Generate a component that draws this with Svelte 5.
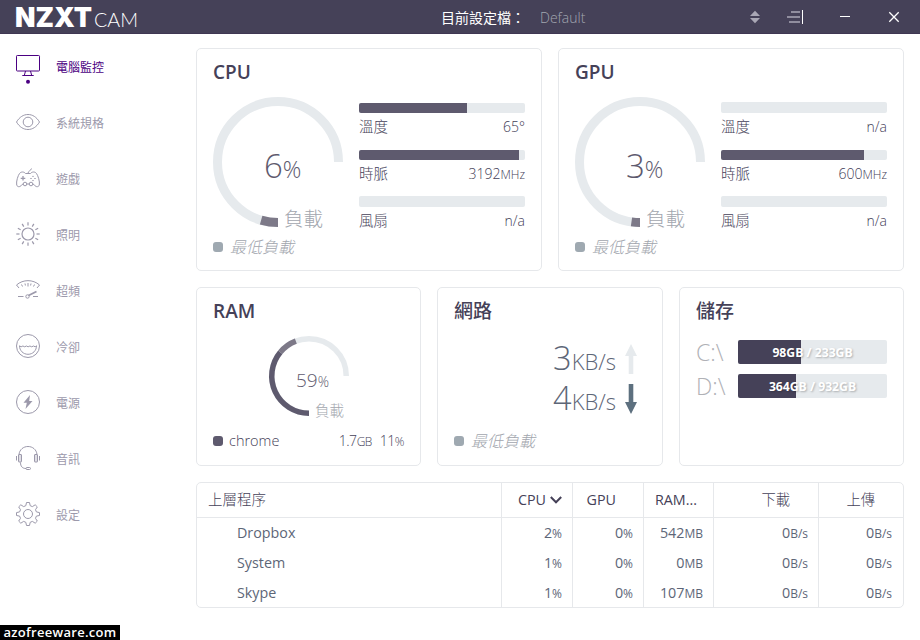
<script lang="ts">
  type Meter = { label: string; value: string; unit?: string; fill: number | null };

  const nav = [
    { id: 'monitor', label: '電腦監控' },
    { id: 'specs', label: '系統規格' },
    { id: 'games', label: '遊戲' },
    { id: 'lighting', label: '照明' },
    { id: 'overclock', label: '超頻' },
    { id: 'cooling', label: '冷卻' },
    { id: 'power', label: '電源' },
    { id: 'audio', label: '音訊' },
    { id: 'settings', label: '設定' }
  ];
  let active = $state('monitor');

  const units: Array<{ title: string; load: number; meters: Meter[] }> = [
    {
      title: 'CPU',
      load: 6,
      meters: [
        { label: '溫度', value: '65°', fill: 65 },
        { label: '時脈', value: '3192', unit: 'MHz', fill: 96.5 },
        { label: '風扇', value: 'n/a', fill: null }
      ]
    },
    {
      title: 'GPU',
      load: 3,
      meters: [
        { label: '溫度', value: 'n/a', fill: null },
        { label: '時脈', value: '600', unit: 'MHz', fill: 86 },
        { label: '風扇', value: 'n/a', fill: null }
      ]
    }
  ];

  const drives = [
    { name: 'C:\\', used: 98, total: 233 },
    { name: 'D:\\', used: 364, total: 932 }
  ];

  const processes = [
    { name: 'Dropbox', cpu: 2, gpu: 0, ram: 542, down: 0, up: 0 },
    { name: 'System', cpu: 1, gpu: 0, ram: 0, down: 0, up: 0 },
    { name: 'Skype', cpu: 1, gpu: 0, ram: 107, down: 0, up: 0 }
  ];

  const rays = Array.from({ length: 12 }, (_, i) => i * 30);

  // gauge runs clockwise from the bottom and spans 270 degrees
  function arc(size: number, width: number, from: number, to: number) {
    const c = size / 2;
    const r = c - width / 2;
    const a = (from * 2.7 * Math.PI) / 180;
    const b = (to * 2.7 * Math.PI) / 180;
    const large = b - a > Math.PI ? 1 : 0;
    return `M${c - r * Math.sin(a)} ${c + r * Math.cos(a)}A${r} ${r} 0 ${large} 1 ${c - r * Math.sin(b)} ${c + r * Math.cos(b)}`;
  }
</script>

{#snippet icon(id: string)}
  <svg class="icon" viewBox="0 0 24 24" width="24" height="24">
    {#if id === 'monitor'}
      <rect x=".5" y="1.500" width="23" height="15.500" rx=".8" />
      <path d="M9.500 17 8.300 21.500M14.500 17l1.200 4.500M6.300 21.500h11.400" />
      <circle class="solid" cx="12" cy="27.800" r="2" />
    {:else if id === 'specs'}
      <path d="M.5 12C3.500 7 7.500 4.500 12 4.500S20.500 7 23.500 12C20.500 17 16.500 19.500 12 19.500S3.500 17 .5 12z" />
      <circle cx="12" cy="12" r="4.800" />
    {:else if id === 'games'}
      <path d="M12 7.500C12 4.500 14.500 5.500 15.500 2.500" />
      <path d="M9.500 7.500h5C16 5.500 19 5.500 20.500 7.500C22 9.500 24 15.500 23.300 19C22.500 21.500 19.500 21 18.500 19L17 18M7 18L5.500 19C4.500 21 1.500 21.500.7 19C0 15.500 2 9.500 3.500 7.500C5 5.500 8 5.500 9.500 7.500M10.700 18h2.600" />
      <circle cx="9" cy="18" r="1.800" /><circle cx="15" cy="18" r="1.800" />
      <path d="M4.700 12.300h4.600M7 10v4.600" stroke-width="1.300" />
      <path d="M16.300 10.400h1.400M18.300 12.500h1.400M16.300 14.600h1.400M14.300 12.500h1.400" />
    {:else if id === 'lighting'}
      <circle cx="12" cy="12" r="6" stroke-width="1.200" />
      {#each rays as deg}
        <path d="M12 .3v3.200" stroke-width="1.200" transform="rotate({deg} 12 12)" />
      {/each}
    {:else if id === 'overclock'}
      <path d="M.5 7C7 1.200 17 1.200 23.500 7M.5 7l2.500 3M23.500 7l-2.500 3M5.500 6.500l1 2M9 5.500l.4 2M12 5v3.500M15 5.500l-.4 2M18.500 6.500l-1 2" />
      <path d="M2 18.500h5.500M17 18.500h5" />
      <path d="M12.500 17.500 20.500 13.500" stroke-width="1.600" />
      <circle cx="11.500" cy="18.500" r="1.700" />
    {:else if id === 'cooling'}
      <circle cx="12" cy="12" r="11.500" />
      <path d="M3.500 11.800l1.600 1 1.800-.8 1.800.8 1.700-.8 1.700.8 1.800-.8 1.800.8 1.800-.8 1.700.8 1.300-1C20.500 16.500 16.800 20.300 12 20.300S3.500 16.500 3.500 11.800z" />
    {:else if id === 'power'}
      <circle cx="12" cy="12" r="11.500" />
      <path class="solid" d="M14 5 7.500 12.800h3.300L9.500 19 16.500 11h-3.300z" />
    {:else if id === 'audio'}
      <path d="M3 8.500C3.500 3.500 7.500.5 12 .5S20.500 3.500 21 8.500M.5 10v4.500M23.500 10v4.500M4.500 16.500C4.500 20.500 6.500 22.500 10 22.500" />
      <rect class="pad" x="2.500" y="8.500" width="3" height="7.500" rx=".5" />
      <rect class="pad" x="18.500" y="8.500" width="3" height="7.500" rx=".5" />
      <rect x="10" y="21.500" width="4.500" height="2" rx="1" />
    {:else}
      <path stroke-linejoin="round" d="M10.500.5h3l.7 3.200 2.200.9 2.800-1.800 2.100 2.100-1.800 2.800.9 2.200 3.100.7v2.900l-3.100.6-.9 2.200 1.800 2.800-2.100 2.100-2.800-1.800-2.200.9-.7 3.200h-3l-.7-3.200-2.200-.9-2.800 1.800-2.100-2.100 1.800-2.800-.9-2.200-3.100-.6v-2.900l3.100-.7.9-2.200-1.800-2.800 2.100-2.100 2.800 1.800 2.200-.9z" />
      <circle cx="12" cy="12" r="4.500" />
    {/if}
  </svg>
{/snippet}

{#snippet idle()}
  <div class="legend idle"><i class="chip"></i><em>最低負載</em></div>
{/snippet}

<div class="app">
  <header class="titlebar">
    <svg class="logo" viewBox="0 0 124 34" width="124" height="34" aria-label="NZXT CAM">
      <text class="brand" x="-1" y="26.500" textLength="77" lengthAdjust="spacingAndGlyphs">NZXT</text>
      <text class="product" x="78" y="27" textLength="44" lengthAdjust="spacingAndGlyphs">CAM</text>
    </svg>
    <span class="profile-label">目前設定檔：</span>
    <button class="profile">
      <span>Default</span>
      <svg width="10" height="14" viewBox="0 0 10 14"><path d="M0 6 5 .8 10 6zM0 8h10L5 13.200z" fill="#a9a7b5" /></svg>
    </button>
    <svg class="dock" width="17" height="14" viewBox="0 0 17 14">
      <path d="M4 2h9M0 7h13M2 12h11" stroke="#a9a7b5" stroke-width="1.500" />
      <path d="M15.500 0v14" stroke="#fff" />
    </svg>
    <svg class="minimize" width="10" height="10" viewBox="0 0 10 10"><path d="M0 4.500h10" stroke="#fff" /></svg>
    <svg class="close" width="10" height="10" viewBox="0 0 10 10"><path d="M.3.300l9.400 9.400M9.700.300.300 9.700" stroke="#fff" stroke-width="1.300" /></svg>
  </header>

  <div class="body">
    <nav>
      {#each nav as item}
        <button class="nav-item" class:active={item.id === active} onclick={() => (active = item.id)}>
          {@render icon(item.id)}
          <span>{item.label}</span>
        </button>
      {/each}
    </nav>

    <main>
      <div class="row two">
        {#each units as unit}
          <section class="card">
            <h2>{unit.title}</h2>
            <div class="unit-body">
              <div class="gauge large">
                <svg width="130" height="130" viewBox="0 0 130 130">
                  <path class="track" d={arc(130, 9, 0, 100)} stroke-width="9" />
                  <path class="part" d={arc(130, 9, 0, unit.load)} stroke-width="9" />
                </svg>
                <div class="percent">{unit.load}<small>%</small></div>
                <span class="caption">負載</span>
              </div>
              <div class="meters">
                {#each unit.meters as m}
                  <div class="meter">
                    <div class="bar" class:blank={m.fill === null}>
                      {#if m.fill !== null}<div class="fill" style="width: {m.fill}%"></div>{/if}
                    </div>
                    <div class="meter-text">
                      <span>{m.label}</span>
                      <span class="value">{m.value}{#if m.unit}<small>{m.unit}</small>{/if}</span>
                    </div>
                  </div>
                {/each}
              </div>
            </div>
            {@render idle()}
          </section>
        {/each}
      </div>

      <div class="row three">
        <section class="card">
          <h2>RAM</h2>
          <div class="gauge small">
            <svg width="80" height="80" viewBox="0 0 80 80">
              <path class="track" d={arc(80, 5.5, 0, 100)} stroke-width="5.500" />
              <path class="main" d={arc(80, 5.5, 0, 48)} stroke-width="5.500" />
              <path class="part" d={arc(80, 5.5, 48, 59)} stroke-width="5.500" />
            </svg>
            <div class="percent">59<small>%</small></div>
            <span class="caption">負載</span>
          </div>
          <div class="legend">
            <i class="chip"></i><span class="proc">chrome</span>
            <span class="amount">1.7<small>GB</small></span>
            <span class="share">11<small>%</small></span>
          </div>
        </section>

        <section class="card">
          <h2 class="cjk">網路</h2>
          <div class="net">
            <div class="rate">
              <span>3<small>KB/s</small></span>
              <svg width="12" height="30" viewBox="0 0 12 30"><path d="M6 0 12 12H8.300V30H3.700V12H0z" fill="#e6eaed" /></svg>
            </div>
            <div class="rate">
              <span>4<small>KB/s</small></span>
              <svg width="12" height="30" viewBox="0 0 12 30"><path d="M6 30 12 18H8.300V0H3.700V18H0z" fill="#5d707f" /></svg>
            </div>
          </div>
          {@render idle()}
        </section>

        <section class="card">
          <h2 class="cjk">儲存</h2>
          <div class="drives">
            {#each drives as d}
              <div class="drive">
                <span class="drive-name">{d.name}</span>
                <div class="capacity">
                  <div class="used" style="width: {(d.used / d.total) * 100}%"></div>
                  <span class="capacity-text">{d.used}GB / {d.total}GB</span>
                </div>
              </div>
            {/each}
          </div>
        </section>
      </div>

      <section class="card table">
        <div class="tr head">
          <span>上層程序</span>
          <span>CPU <svg width="12" height="8" viewBox="0 0 12 8"><path d="M.8 1 6 6.300 11.200 1" fill="none" stroke="#454158" stroke-width="2" /></svg></span>
          <span>GPU</span>
          <span>RAM...</span>
          <span>下載</span>
          <span>上傳</span>
        </div>
        {#each processes as p}
          <div class="tr">
            <span>{p.name}</span>
            <span>{p.cpu}<small>%</small></span>
            <span>{p.gpu}<small>%</small></span>
            <span>{p.ram}<small>MB</small></span>
            <span>{p.down}<small>B/s</small></span>
            <span>{p.up}<small>B/s</small></span>
          </div>
        {/each}
      </section>
    </main>
  </div>

  <div class="watermark">azofreeware.com</div>
</div>

<style>
  :global(body) {
    margin: 0;
    background: #fff;
  }
  .app {
    position: relative;
    width: 920px;
    height: 640px;
    overflow: hidden;
    font-family: "Open Sans", "Noto Sans CJK TC", sans-serif;
    color: #454158;
  }
  * {
    box-sizing: border-box;
  }
  button {
    padding: 0;
    border: 0;
    background: none;
    font: inherit;
    color: inherit;
    text-align: left;
  }
  svg {
    display: block;
    flex: none;
    overflow: visible;
  }
  small {
    font-size: 12px;
  }

  .titlebar {
    display: flex;
    align-items: center;
    height: 34px;
    padding: 0 21px 0 16px;
    background: #454158;
    border-bottom: 1px solid #3f3753;
    color: #fff;
  }
  .logo text {
    fill: #fff;
  }
  .brand {
    font: 900 27px Inter, sans-serif;
  }
  .product {
    font: 300 20px Lato, sans-serif;
  }
  .profile-label {
    width: 99px;
    margin-left: 301px;
    font-size: 14px;
    white-space: nowrap;
  }
  .profile {
    display: flex;
    align-items: center;
    justify-content: space-between;
    width: 220px;
    padding-top: 1px;
    font-size: 14px;
    font-weight: 300;
    color: #a2a6b0;
  }
  .dock {
    margin-left: 27px;
  }
  .minimize {
    margin-left: 36px;
  }
  .close {
    margin-left: auto;
  }

  .body {
    display: flex;
  }
  nav {
    display: flex;
    flex-direction: column;
    width: 196px;
    padding: 4px 0 0 16px;
  }
  .nav-item {
    display: flex;
    align-items: center;
    gap: 16px;
    height: 56px;
    font-size: 12px;
    color: #9c99ab;
  }
  .nav-item span {
    padding-top: 1px;
  }
  .nav-item.active {
    color: #4b0082;
  }
  .icon {
    fill: none;
    stroke: currentColor;
    stroke-width: 1;
  }
  .solid {
    fill: currentColor;
    stroke: none;
  }
  .pad {
    fill: #e0dfe5;
  }

  main {
    display: flex;
    flex-direction: column;
    gap: 16px;
    width: 708px;
    padding-top: 14px;
  }
  .row {
    display: grid;
    gap: 16px;
  }
  .two {
    grid-template-columns: 346px 346px;
    grid-auto-rows: 223px;
  }
  .three {
    grid-template-columns: 225px 226px 225px;
    grid-auto-rows: 179px;
  }
  .card {
    padding: 9px 16px 0;
    border: 1px solid #e6e8eb;
    border-radius: 5px;
  }
  h2 {
    margin: 0;
    font-size: 19px;
    font-weight: 600;
    line-height: 28px;
  }
  h2.cjk {
    font-weight: 500;
  }

  .unit-body {
    display: flex;
    justify-content: space-between;
    height: 130px;
    margin-top: 11px;
  }
  .gauge {
    position: relative;
  }
  .gauge path {
    fill: none;
  }
  .track {
    stroke: #e6eaed;
  }
  .main {
    stroke: #5e5a6e;
  }
  .part {
    stroke: #7d7988;
  }
  .large {
    width: 130px;
    height: 130px;
  }
  .percent {
    position: absolute;
    white-space: nowrap;
    font-weight: 300;
    color: #5e5a6e;
  }
  .large .percent {
    left: 51px;
    top: 46px;
    font-size: 33px;
    line-height: 46px;
  }
  .large .percent small {
    font-size: 23px;
  }
  .caption {
    position: absolute;
    font-weight: 300;
    color: #a2a6ae;
    white-space: nowrap;
  }
  .large .caption {
    left: 71px;
    top: 108px;
    font-size: 19.5px;
    line-height: 28px;
  }
  .small {
    width: 80px;
    height: 80px;
    margin: 11px 0 0 56px;
  }
  .small .percent {
    left: 27px;
    top: 30px;
    font-size: 19px;
    line-height: 28px;
  }
  .small .percent small {
    font-size: 14px;
  }
  .small .caption {
    left: 46px;
    top: 65px;
    font-size: 14.500px;
    line-height: 20px;
  }

  .meters {
    width: 166px;
    padding-top: 6px;
  }
  .meter {
    display: flow-root;
    height: 47px;
  }
  .bar {
    height: 10px;
    border-radius: 2px;
    overflow: hidden;
    background: #e6eaed;
  }
  .bar.blank {
    height: 11px;
    margin-top: -1px;
  }
  .fill {
    height: 100%;
    background: #5e5a6e;
  }
  .meter-text {
    display: flex;
    justify-content: space-between;
    margin-top: 4px;
    font-size: 14.500px;
    font-weight: 300;
    line-height: 20px;
  }
  .value {
    font-size: 14px;
  }

  .legend {
    display: flex;
    align-items: center;
    height: 20px;
    margin-top: 15px;
    font-size: 14.500px;
    font-weight: 300;
    line-height: 20px;
  }
  .chip {
    width: 10px;
    height: 10px;
    margin-right: 6px;
    border-radius: 3px;
    background: #5e5a6e;
  }
  .idle {
    margin-top: 10px;
    font-size: 16px;
    color: #a2a6ae;
  }
  .idle .chip {
    margin-right: 7px;
    background: #9fa9b1;
  }
  .proc {
    flex: 1;
  }
  .amount {
    margin-right: 8px;
  }
  .amount,
  .share {
    font-size: 14px;
    letter-spacing: -0.5px;
  }

  .net {
    display: flex;
    flex-direction: column;
    gap: 10px;
    padding: 19px 9px 0 0;
  }
  .rate {
    display: flex;
    align-items: center;
    justify-content: flex-end;
    gap: 9px;
    height: 30px;
    font-size: 32.500px;
    font-weight: 300;
    line-height: 28px;
    color: #5d6677;
  }
  .rate small {
    font-size: 22px;
  }
  .net + .legend {
    margin-top: 17px;
  }

  .drives {
    display: flex;
    flex-direction: column;
    gap: 10px;
    margin-top: 15px;
  }
  .drive {
    display: flex;
    align-items: center;
    justify-content: space-between;
    height: 24px;
  }
  .drive-name {
    font-size: 23px;
    font-weight: 300;
    line-height: 24px;
    color: #b0b1b6;
  }
  .capacity {
    position: relative;
    width: 149px;
    height: 24px;
    border-radius: 2px;
    overflow: hidden;
    background: #e6eaed;
  }
  .used {
    height: 100%;
    background: #454158;
  }
  .capacity-text {
    position: absolute;
    inset: 0;
    font-size: 12.200px;
    font-weight: 700;
    line-height: 25px;
    text-align: center;
    color: #fff;
    text-shadow: 1px 1px 2px rgba(0, 0, 0, 0.25);
  }

  .table {
    height: 126px;
    padding: 0;
    overflow: hidden;
  }
  .tr {
    display: grid;
    grid-template-columns: 305px 71px 71px 70px 105px 1fr;
    height: 30px;
    font-size: 14.300px;
    line-height: 29px;
    color: #5d6677;
  }
  .tr > span {
    padding-right: 10px;
    text-align: right;
    border-right: 1px solid #e6e8eb;
  }
  .tr > span:first-child {
    padding-left: 40px;
    line-height: 30px;
    text-align: left;
  }
  .tr > span:last-child {
    padding-right: 11px;
    border-right: 0;
  }
  .head {
    height: 35px;
    line-height: 34px;
    border-bottom: 1px solid #e6e8eb;
    color: #454158;
  }
  .head > span:first-child {
    padding-left: 11px;
    font-size: 14.500px;
    font-weight: 300;
    line-height: 34px;
  }
  .head > span:nth-child(2) {
    display: flex;
    align-items: center;
    justify-content: flex-end;
    gap: 4px;
  }
  .head > span:nth-child(3) {
    padding-right: 27px;
  }
  .head > span:nth-child(4) {
    padding-right: 16px;
  }
  .head > span:nth-child(n + 5) {
    padding-right: 28px;
    font-weight: 300;
  }

  .watermark {
    position: absolute;
    left: 0;
    bottom: 0;
    width: 120px;
    height: 15px;
    background: #000;
    color: #fff;
    font: 600 13px/15px "Open Sans", sans-serif;
    letter-spacing: 0.3px;
    text-align: center;
  }
</style>
